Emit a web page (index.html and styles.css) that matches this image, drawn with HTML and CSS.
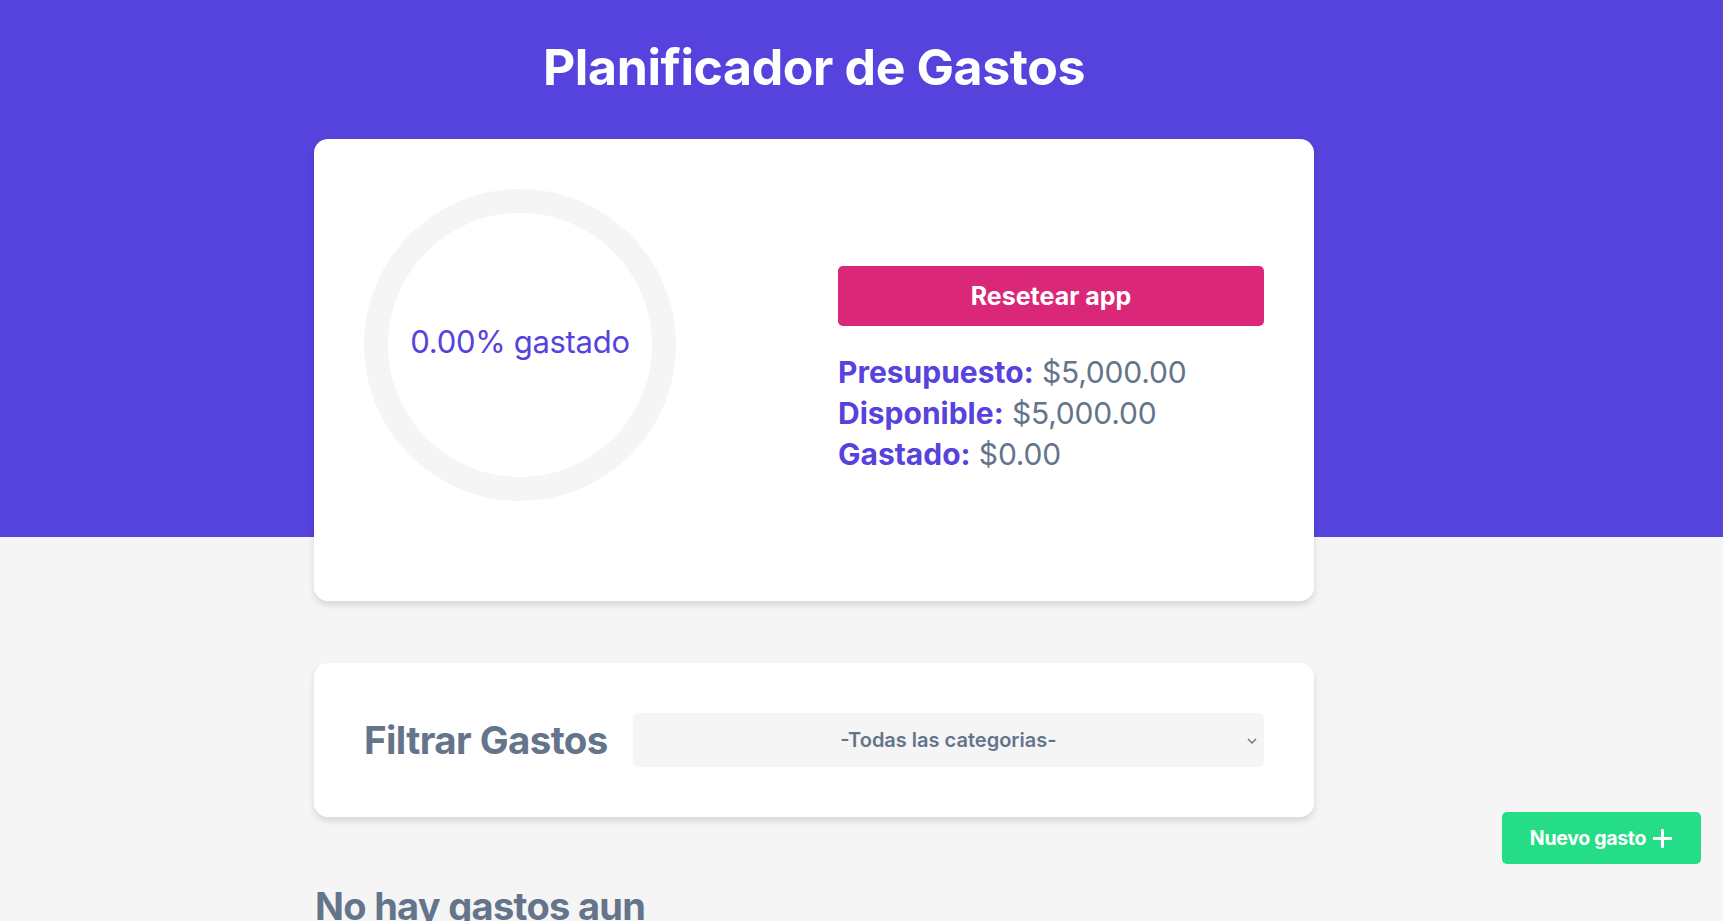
FILE: index.html
```html
<!DOCTYPE html>
<html lang="es">
<head>
<meta charset="utf-8">
<title>Planificador de Gastos</title>
<link rel="stylesheet" href="styles.css">
</head>
<body>
<header class="header">
  <h1 class="titulo">Planificador de Gastos</h1>
  <div class="contenedor presupuesto">
    <div class="grafica">
      <div class="circulo"><p class="porcentaje">0.00% gastado</p></div>
    </div>
    <div class="contenido">
      <button class="reset">Resetear app</button>
      <p class="linea"><span class="etiqueta">Presupuesto:</span> $5,000.00</p>
      <p class="linea"><span class="etiqueta">Disponible:</span> $5,000.00</p>
      <p class="linea"><span class="etiqueta">Gastado:</span> $0.00</p>
    </div>
  </div>
</header>
<main class="main">
  <div class="contenedor filtros">
    <label class="filtro-label" for="filtro">Filtrar Gastos</label>
    <div class="select-wrap">
      <select id="filtro" class="select">
        <option>-Todas las categorias-</option>
      </select>
      <svg class="chevron" width="10" height="6" viewBox="0 0 10 6"><path d="M1 1l4 4 4-4" fill="none" stroke="#64748b" stroke-width="1.4"/></svg>
    </div>
  </div>
  <h2 class="sin-gastos">No hay gastos aun</h2>
</main>
<button class="nuevo">Nuevo gasto
  <svg width="21" height="21" viewBox="0 0 21 21"><path d="M10.5 1v19M1 10.5h19" stroke="#fff" stroke-width="3"/></svg>
</button>
</body>
</html>
```
FILE: styles.css
```css
* { box-sizing: border-box; }
body {
  margin: 0;
  background: #f5f5f5;
  font-family: Inter, "Noto Sans", sans-serif;
}
.header {
  background: #5642dd;
  height: 537px;
}
.titulo {
  margin: 0;
  padding-top: 37px;
  text-align: center;
  width: 1000px;
  margin-left: 314px;
  color: #fff;
  font-size: 50px;
  font-weight: 700;
  letter-spacing: -0.4px;
}
.contenedor {
  width: 1000px;
  margin-left: 314px;
  background: #fff;
  border-radius: 14px;
  box-shadow: 0 4px 6px rgba(0,0,0,0.12);
  padding: 50px;
}
.presupuesto {
  margin-top: 42px;
  display: grid;
  grid-template-columns: 1fr 1fr;
  gap: 48px;
}
.grafica { height: 362px; }
.circulo {
  width: 312px;
  height: 312px;
  border-radius: 50%;
  border: 24px solid #f5f5f5;
  display: flex;
  align-items: center;
  justify-content: center;
}
.porcentaje {
  margin: 0 0 8px;
  color: #5642dd;
  font-size: 31px;
  letter-spacing: -0.3px;
}
.contenido { align-self: center; }
.reset {
  display: block;
  width: 100%;
  height: 60px;
  border: 0;
  border-radius: 5px;
  background: #db2777;
  color: #fff;
  font-family: inherit;
  font-size: 25px;
  font-weight: 700;
  margin-bottom: 26px;
}
.linea {
  margin: 0;
  font-size: 30px;
  line-height: 41px;
  color: #64748b;
  letter-spacing: -0.2px;
}
.etiqueta { color: #5642dd; font-weight: 700; letter-spacing: 0; }
.main { padding-top: 126px; }
.filtros {
  display: flex;
  align-items: center;
  gap: 25px;
}
.filtro-label {
  color: #64748b;
  font-size: 38.5px;
  font-weight: 700;
  letter-spacing: -0.6px;
  flex: none;
}
.select-wrap { flex: 1; position: relative; }
.select {
  width: 100%;
  height: 54px;
  border: 0;
  border-radius: 5px;
  background: #f5f5f5;
  appearance: none;
  text-align: center;
  text-align-last: center;
  font-family: inherit;
  font-size: 20px;
  font-weight: 600;
  color: #64748b;
  letter-spacing: 0;
}
.chevron { position: absolute; right: 7px; top: 25px; }
.sin-gastos {
  margin: 66px 0 0 315px;
  color: #64748b;
  font-size: 38px;
  font-weight: 700;
  letter-spacing: -0.7px;
}
.nuevo {
  position: fixed;
  right: 22px;
  bottom: 57px;
  width: 199px;
  height: 52px;
  border: 0;
  border-radius: 5px;
  background: #25dd86;
  color: #fff;
  font-family: inherit;
  font-size: 19.5px;
  font-weight: 700;
  letter-spacing: -0.3px;
  display: flex;
  align-items: center;
  justify-content: center;
  gap: 6px;
}
```
